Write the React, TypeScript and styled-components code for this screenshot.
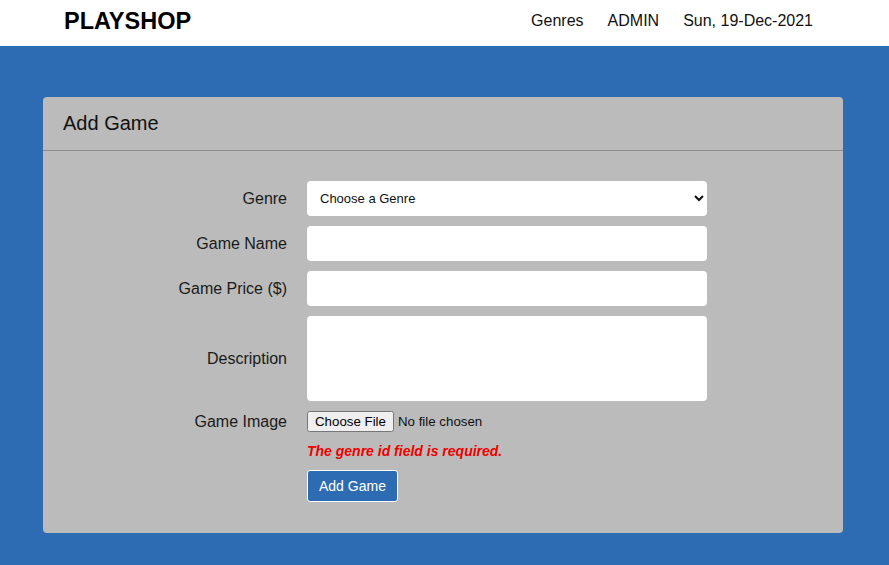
import React from "react";
import styled, { createGlobalStyle } from "styled-components";

const Global = createGlobalStyle`
  html, body { margin: 0; padding: 0; }
  body {
    background: #2d6cb3;
    font-family: "Liberation Sans", Arial, sans-serif;
    min-height: 565px;
  }
`;

const TopBar = styled.header`
  background: #ffffff;
  height: 46px;
  padding-right: 3px;
`;

const TopInner = styled.div`
  width: 800px;
  margin: 0 auto;
  padding: 0 30px 0 21px;
  box-sizing: border-box;
  height: 100%;
  display: flex;
  align-items: center;
  justify-content: space-between;
`;

const Brand = styled.div`
  font-size: 23.5px;
  font-weight: 700;
  color: #000;
  margin-top: -3px;
`;

const Nav = styled.nav`
  display: flex;
  gap: 24px;
  font-size: 16px;
  color: #111;
  margin-top: -4px;
`;

const NavItem = styled.span``;

const Main = styled.main`
  padding-top: 51px;
  padding-bottom: 33px;
  padding-right: 3px;
`;

const Card = styled.section`
  width: 800px;
  margin: 0 auto;
  background: #bbbbbb;
  border-radius: 4px;
`;

const CardHeader = styled.div`
  height: 53px;
  border-bottom: 1px solid #8a8a8a;
  padding-left: 20px;
  display: flex;
  align-items: center;
  font-size: 20px;
  color: #111;
`;

const Form = styled.form`
  display: grid;
  grid-template-columns: 224px 400px;
  column-gap: 20px;
  row-gap: 10px;
  padding: 30px 0 31px 20px;
  align-items: center;
`;

const Label = styled.label`
  text-align: right;
  font-size: 16px;
  color: #1a1a1a;
`;

const Select = styled.select`
  height: 35px;
  width: 400px;
  border: none;
  border-radius: 4px;
  background: #fff;
  padding: 0 8px 0 9px;
  font-family: "Liberation Sans", Arial, sans-serif;
  font-size: 13px;
  color: #111;
`;

const Input = styled.input`
  height: 35px;
  width: 400px;
  border: none;
  border-radius: 4px;
  background: #fff;
  box-sizing: border-box;
  padding: 0 12px;
  font-size: 14px;
`;

const TextArea = styled.textarea`
  height: 85px;
  width: 400px;
  border: none;
  border-radius: 4px;
  background: #fff;
  box-sizing: border-box;
  resize: none;
  padding: 8px 12px;
  display: block;
`;

const FileInput = styled.input`
  font-family: "Liberation Sans", Arial, sans-serif;
  font-size: 13.3px;
  color: #111;
`;

const Spacer = styled.div``;

const ErrorText = styled.div`
  color: #ee0000;
  font-weight: 700;
  font-style: italic;
  font-size: 14px;
  margin-top: 1px;
`;

const SubmitButton = styled.button`
  justify-self: start;
  height: 32px;
  padding: 0 11px;
  background: #2d6cb3;
  color: #fff;
  border: 1px solid #ffffff;
  border-radius: 3px;
  font-family: "Liberation Sans", Arial, sans-serif;
  font-size: 14px;
  margin-top: 1px;
`;

export default function App() {
  return (
    <>
      <Global />
      <TopBar>
        <TopInner>
          <Brand>PLAYSHOP</Brand>
          <Nav>
            <NavItem>Genres</NavItem>
            <NavItem>ADMIN</NavItem>
            <NavItem>Sun, 19-Dec-2021</NavItem>
          </Nav>
        </TopInner>
      </TopBar>
      <Main>
        <Card>
          <CardHeader>Add Game</CardHeader>
          <Form onSubmit={(e) => e.preventDefault()}>
            <Label>Genre</Label>
            <Select defaultValue="">
              <option value="">Choose a Genre</option>
            </Select>
            <Label>Game Name</Label>
            <Input type="text" />
            <Label>Game Price ($)</Label>
            <Input type="text" />
            <Label>Description</Label>
            <TextArea />
            <Label>Game Image</Label>
            <FileInput type="file" />
            <Spacer />
            <ErrorText>The genre id field is required.</ErrorText>
            <Spacer />
            <SubmitButton type="submit">Add Game</SubmitButton>
          </Form>
        </Card>
      </Main>
    </>
  );
}
